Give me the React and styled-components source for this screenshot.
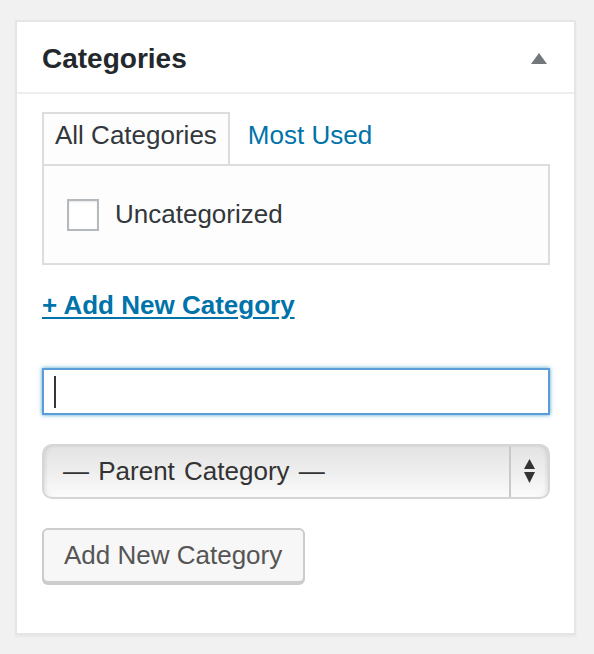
import styled, { createGlobalStyle } from 'styled-components';

const GlobalStyle = createGlobalStyle`
  html, body {
    margin: 0;
    padding: 0;
    background: #f1f1f1;
  }

  body {
    font-family: "Liberation Sans", Arial, sans-serif;
    color: #32373c;
  }
`;

const Page = styled.div`
  padding: 20px 18px 20px 15px;
`;

const Postbox = styled.div`
  width: 561px;
  box-sizing: border-box;
  border: 2px solid #e5e5e5;
  background: #fff;
  box-shadow: 0 2px 2px rgba(0, 0, 0, 0.04);
`;

const Header = styled.div`
  display: flex;
  align-items: center;
  justify-content: space-between;
  box-sizing: border-box;
  height: 72px;
  padding: 3px 27px 0 25px;
  border-bottom: 2px solid #eee;
`;

const Title = styled.h2`
  margin: 0;
  color: #23282d;
  font-size: 28px;
  font-weight: bold;
  line-height: 1;
`;

const Toggle = styled.svg`
  display: block;
  width: 16px;
  height: 11px;
`;

const Inside = styled.div`
  padding: 18px 24px 50px 25px;
`;

const Tabs = styled.div`
  display: flex;
  gap: 5px;
`;

const Tab = styled.div`
  box-sizing: border-box;
  height: 52px;
  padding: 0 11px 8px;
  border: 2px solid ${(p) => (p.$active ? '#ddd' : 'transparent')};
  border-bottom: none;
  background: ${(p) => (p.$active ? '#fdfdfd' : 'transparent')};
  color: ${(p) => (p.$active ? '#32373c' : '#0073aa')};
  font-size: 26px;
  line-height: 42px;
`;

const TabPanel = styled.div`
  display: flex;
  align-items: center;
  box-sizing: border-box;
  height: 101px;
  padding-left: 23px;
  border: 2px solid #ddd;
  background: #fdfdfd;
`;

const Checkbox = styled.span`
  box-sizing: border-box;
  width: 32px;
  height: 32px;
  margin-right: 16px;
  border: 2px solid #b4b9be;
  background: #fff;
  box-shadow: inset 0 1px 2px rgba(0, 0, 0, 0.1);
`;

const Label = styled.span`
  color: #32373c;
  font-size: 26px;
`;

const AddLink = styled.a`
  display: inline-block;
  margin-top: 25px;
  color: #0073aa;
  font-size: 26px;
  font-weight: bold;
  line-height: 30px;
  text-decoration: underline;
  text-decoration-thickness: 2px;
  text-underline-offset: 3px;
`;

const TextField = styled.div`
  box-sizing: border-box;
  height: 47px;
  margin-top: 48px;
  padding: 6px 0 0 10px;
  border: 2px solid #5b9dd9;
  background: #fff;
  box-shadow: 0 0 4px rgba(30, 140, 190, 0.8);
`;

const Caret = styled.span`
  display: block;
  width: 2px;
  height: 32px;
  background: #32373c;
`;

const SelectBox = styled.div`
  display: flex;
  align-items: center;
  box-sizing: border-box;
  height: 55px;
  margin-top: 29px;
  border: 2px solid #d6d6d6;
  border-radius: 10px;
  background: linear-gradient(#e3e3e3, #efefef 55%, #fbfbfb);
  box-shadow: inset 3px 0 4px -2px rgba(0, 0, 0, 0.12), inset -3px 0 4px -2px rgba(0, 0, 0, 0.12),
    inset 0 -2px 1px rgba(255, 255, 255, 0.9);
`;

const SelectText = styled.span`
  flex: 1;
  padding-left: 19px;
  color: #333;
  font-size: 26px;
  word-spacing: 2px;
`;

const SelectArrows = styled.div`
  display: flex;
  align-items: center;
  justify-content: center;
  align-self: stretch;
  width: 37px;
  border-left: 2px solid #c9c9c9;
`;

const Button = styled.button`
  display: block;
  box-sizing: border-box;
  height: 55px;
  margin-top: 29px;
  padding: 0 21px 0 20px;
  border: 2px solid #ccc;
  border-radius: 6px;
  background: #f7f7f7;
  box-shadow: 0 2px 0 #ccc;
  color: #555;
  font-family: "Liberation Sans", Arial, sans-serif;
  font-size: 26px;
  cursor: pointer;
`;

export default function App() {
  return (
    <Page>
      <GlobalStyle />
      <Postbox>
        <Header>
          <Title>Categories</Title>
          <Toggle viewBox="0 0 16 11">
            <polygon points="8,0 16,11 0,11" fill="#72777c" />
          </Toggle>
        </Header>

        <Inside>
          <Tabs>
            <Tab $active>All Categories</Tab>
            <Tab>Most Used</Tab>
          </Tabs>
          <TabPanel>
            <Checkbox />
            <Label>Uncategorized</Label>
          </TabPanel>

          <AddLink href="#">+ Add New Category</AddLink>

          <TextField>
            <Caret />
          </TextField>

          <SelectBox>
            <SelectText>— Parent Category —</SelectText>
            <SelectArrows>
              <svg width="11" height="25" viewBox="0 0 11 25">
                <polygon points="5.5,0 11,10 0,10" fill="#333" />
                <polygon points="0,13 11,13 5.5,24" fill="#333" />
              </svg>
            </SelectArrows>
          </SelectBox>

          <Button>Add New Category</Button>
        </Inside>
      </Postbox>
    </Page>
  );
}
